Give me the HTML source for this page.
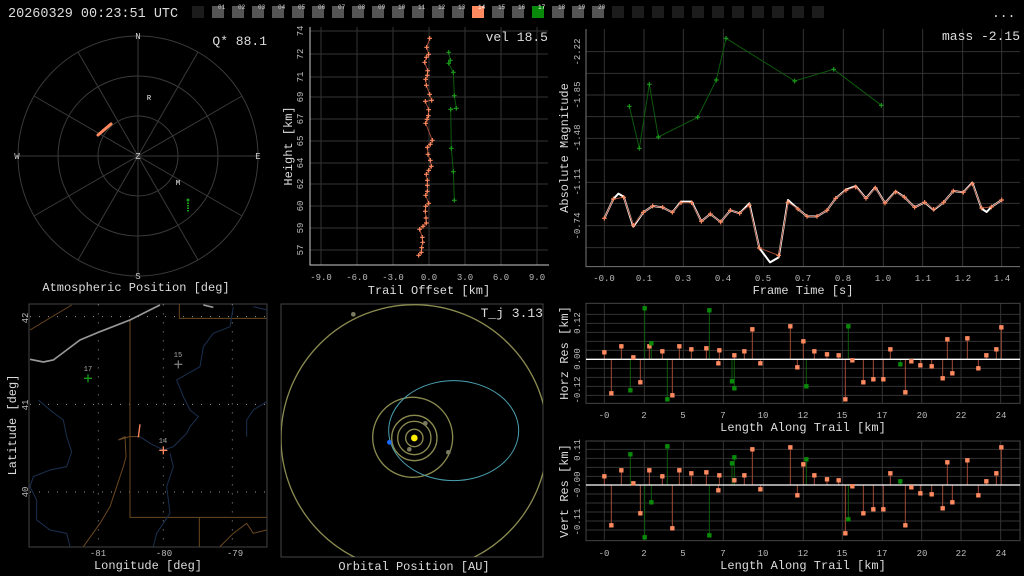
<!DOCTYPE html>
<html><head><meta charset="utf-8"><style>
html,body{margin:0;padding:0;background:#000;}
svg{display:block;font-family:"Liberation Mono",monospace;}
</style></head><body>
<svg width="1024" height="576" viewBox="0 0 1024 576" xmlns="http://www.w3.org/2000/svg">
<defs>
<marker id="po" markerUnits="userSpaceOnUse" viewBox="-9 -9 18 18" markerWidth="18" markerHeight="18" refX="0" refY="0" overflow="visible"><path d="M-7 0H7M0-7V7" stroke="#ff8a60" stroke-width="3.5"/></marker>
<marker id="pg" markerUnits="userSpaceOnUse" viewBox="-9 -9 18 18" markerWidth="18" markerHeight="18" refX="0" refY="0" overflow="visible"><path d="M-7 0H7M0-7V7" stroke="#1a9a1a" stroke-width="3.5"/></marker>
</defs>
<rect width="1024" height="576" fill="#000"/>
<text x="8" y="17" fill="#ddd" font-size="13.5">20260329 00:23:51 UTC</text>
<text x="992" y="17" fill="#ddd" font-size="13">...</text>
<g>
<rect x="192" y="6" width="12" height="12" fill="#1c1c1c"/>
<g fill="#555">
<rect x="212" y="6" width="12" height="12"/><rect x="232" y="6" width="12" height="12"/><rect x="252" y="6" width="12" height="12"/><rect x="272" y="6" width="12" height="12"/><rect x="292" y="6" width="12" height="12"/><rect x="312" y="6" width="12" height="12"/><rect x="332" y="6" width="12" height="12"/><rect x="352" y="6" width="12" height="12"/><rect x="372" y="6" width="12" height="12"/><rect x="392" y="6" width="12" height="12"/><rect x="412" y="6" width="12" height="12"/><rect x="432" y="6" width="12" height="12"/><rect x="452" y="6" width="12" height="12"/><rect x="492" y="6" width="12" height="12"/><rect x="512" y="6" width="12" height="12"/><rect x="552" y="6" width="12" height="12"/><rect x="572" y="6" width="12" height="12"/><rect x="592" y="6" width="12" height="12"/>
</g>
<rect x="472" y="6" width="12" height="12" fill="#ff8a60"/>
<rect x="532" y="6" width="12" height="12" fill="#0a8a0a"/>
<g fill="#1c1c1c">
<rect x="612" y="6" width="12" height="12"/><rect x="632" y="6" width="12" height="12"/><rect x="652" y="6" width="12" height="12"/><rect x="672" y="6" width="12" height="12"/><rect x="692" y="6" width="12" height="12"/><rect x="712" y="6" width="12" height="12"/><rect x="732" y="6" width="12" height="12"/><rect x="752" y="6" width="12" height="12"/><rect x="772" y="6" width="12" height="12"/><rect x="792" y="6" width="12" height="12"/><rect x="812" y="6" width="12" height="12"/>
</g>
<g fill="#ccc" font-size="6">
<text x="218" y="9">01</text><text x="238" y="9">02</text><text x="258" y="9">03</text><text x="278" y="9">04</text><text x="298" y="9">05</text><text x="318" y="9">06</text><text x="338" y="9">07</text><text x="358" y="9">08</text><text x="378" y="9">09</text><text x="398" y="9">10</text><text x="418" y="9">11</text><text x="438" y="9">12</text><text x="458" y="9">13</text><text x="478" y="9" fill="#fff">14</text><text x="498" y="9">15</text><text x="518" y="9">16</text><text x="538" y="9" fill="#fff">17</text><text x="558" y="9">18</text><text x="578" y="9">19</text><text x="598" y="9">20</text>
</g>
</g>

<g stroke="#3a3a3a" fill="none" stroke-width="1">
<circle cx="138" cy="156" r="40"/><circle cx="138" cy="156" r="80"/><circle cx="138" cy="156" r="120"/>
<path d="M138 36V276M18 156H258M198 52L78 260M242 96L34 216M242 216L34 96M198 260L78 52"/>
</g>
<g fill="#ccc" font-size="9" text-anchor="middle">
<text x="138" y="39">N</text><text x="138" y="279">S</text><text x="17" y="159">W</text><text x="258" y="159">E</text><text x="138" y="159">Z</text>
<text x="149" y="100" fill="#fff" font-size="7">R</text><text x="178" y="185" fill="#fff" font-size="7">M</text>
</g>
<path d="M98 135L111 124" stroke="#ff8a60" stroke-width="3" stroke-linecap="round"/>
<path d="M188 200V212" stroke="#1a9a1a" stroke-width="2" stroke-dasharray="1.5 1"/>
<circle cx="188" cy="200" r="1.5" fill="#1a9a1a"/>
<text x="267" y="45" fill="#ddd" font-size="13" text-anchor="end">Q* 88.1</text>
<text x="136" y="291" fill="#ddd" font-size="12" text-anchor="middle">Atmospheric Position [deg]</text>

<g stroke="#333" stroke-width="1">
<path d="M321 27V265M357 27V265M393 27V265M429 27V265M465 27V265M501 27V265M537 27V265"/>
<path d="M310 31H548M310 54H548M310 77H548M310 97H548M310 119H548M310 141H548M310 163H548M310 184H548M310 206H548M310 228H548M310 250H548"/>
</g>
<path d="M310 27V265H549" stroke="#ccc" stroke-width="1" fill="none"/>
<g fill="#bbb" font-size="9">
<g text-anchor="middle"><text x="321" y="280">-9.0</text><text x="357" y="280">-6.0</text><text x="393" y="280">-3.0</text><text x="429" y="280">0.0</text><text x="465" y="280">3.0</text><text x="501" y="280">6.0</text><text x="537" y="280">9.0</text></g>
<g text-anchor="middle">
<text transform="rotate(-90 303 31)" x="303" y="31">74</text><text transform="rotate(-90 303 54)" x="303" y="54">72</text><text transform="rotate(-90 303 77)" x="303" y="77">71</text><text transform="rotate(-90 303 97)" x="303" y="97">69</text><text transform="rotate(-90 303 119)" x="303" y="119">67</text><text transform="rotate(-90 303 141)" x="303" y="141">65</text><text transform="rotate(-90 303 163)" x="303" y="163">64</text><text transform="rotate(-90 303 184)" x="303" y="184">62</text><text transform="rotate(-90 303 206)" x="303" y="206">60</text><text transform="rotate(-90 303 228)" x="303" y="228">59</text><text transform="rotate(-90 303 250)" x="303" y="250">57</text>
</g></g>
<text x="429" y="294" fill="#ddd" font-size="12" text-anchor="middle">Trail Offset [km]</text>
<text transform="rotate(-90 292 146)" x="292" y="146" fill="#ddd" font-size="12" text-anchor="middle">Height [km]</text>
<text x="548" y="41" fill="#ddd" font-size="13" text-anchor="end">vel 18.5</text>
<g transform="translate(280 20) scale(0.33333)" fill="none">
<polyline stroke="#a04a35" stroke-width="3" marker-start="url(#po)" marker-mid="url(#po)" marker-end="url(#po)" points="449,55 440,82 446,103 439,112 434,127 443,152 442,166 437,178 439,196 449,223 455,241 436,244 446,269 445,287 441,298 437,310 457,361 451,373 442,382 444,403 451,421 454,439 446,451 439,463 442,481 442,496 442,514 437,526 446,550 437,559 436,574 438,594 439,609 429,619 419,628 427,652 428,667 425,683 424,697 416,706"/>
<polyline stroke="#0d5a0d" stroke-width="3" marker-start="url(#pg)" marker-mid="url(#pg)" marker-end="url(#pg)" points="506,97 511,121 506,130 520,157 523,227 529,265 512,268 514,385 520,455 523,541"/>
</g>

<g transform="translate(550 20) scale(0.33333)" fill="none">
<g stroke="#333" stroke-width="3">
<path d="M163 27V740M282 27V740M400 27V740M520 27V740M640 27V740M760 27V740M880 27V740M1000 27V740M1118 27V740M1238 27V740M1355 27V740"/>
<path d="M108 95H1410M108 160H1410M108 225H1410M108 290H1410M108 355H1410M108 420H1410M108 487H1410M108 550H1410M108 617H1410M108 683H1410"/>
</g>
<path d="M108 27V740H1410" stroke="#777" stroke-width="3"/>
<polyline stroke="#0d5a0d" stroke-width="3" marker-start="url(#pg)" marker-mid="url(#pg)" marker-end="url(#pg)" points="238,259 268,385 298,193 325,351 443,292 499,180 528,55 734,183 851,148 994,256"/>
<polyline stroke="#fff" stroke-width="6" stroke-linejoin="round" points="163,595 190,537 205,521 221,530 250,620 280,577 308,558 338,562 367,577 393,545 425,545 454,604 481,582 512,606 541,571 569,580 598,550 628,684 660,727 686,712 714,540 744,567 771,589 801,589 831,571 857,535 888,509 917,498 948,535 976,502 1005,549 1037,514 1063,531 1094,562 1124,547 1151,570 1181,547 1210,513 1240,517 1267,488 1295,566 1310,576 1324,561 1355,540"/>
<polyline stroke="#a04a35" stroke-width="3" marker-start="url(#po)" marker-mid="url(#po)" marker-end="url(#po)" points="163,595 190,537 221,532 250,616 280,577 308,558 338,562 367,577 393,548 425,548 454,604 481,582 512,606 541,571 569,580 598,556 628,684 686,706 714,547 744,567 771,589 801,589 831,571 857,535 888,511 917,501 948,535 976,504 1005,549 1037,516 1063,531 1094,562 1124,547 1151,568 1181,547 1210,513 1240,517 1267,491 1295,564 1324,561 1355,540"/>
</g>
<g fill="#bbb" font-size="9" text-anchor="middle">
<text x="604" y="281">-0.0</text><text x="644" y="281">0.1</text><text x="683" y="281">0.3</text><text x="723" y="281">0.4</text><text x="763" y="281">0.5</text><text x="803" y="281">0.7</text><text x="843" y="281">0.8</text><text x="883" y="281">1.0</text><text x="923" y="281">1.1</text><text x="963" y="281">1.2</text><text x="1002" y="281">1.4</text>
<text transform="rotate(-90 580 52)" x="580" y="52">-2.22</text><text transform="rotate(-90 580 95)" x="580" y="95">-1.85</text><text transform="rotate(-90 580 138)" x="580" y="138">-1.48</text><text transform="rotate(-90 580 182)" x="580" y="182">-1.11</text><text transform="rotate(-90 580 226)" x="580" y="226">-0.74</text>
</g>
<text x="803" y="294" fill="#ddd" font-size="12" text-anchor="middle">Frame Time [s]</text>
<text transform="rotate(-90 568 148)" x="568" y="148" fill="#ddd" font-size="12" text-anchor="middle">Absolute Magnitude</text>
<text x="1020" y="40" fill="#ddd" font-size="13" text-anchor="end">mass -2.15</text>

<rect x="29" y="304" width="238" height="243" fill="none" stroke="#444"/>
<g transform="translate(0 300) scale(0.33333)" fill="none">
<path d="M90 313H802M90 576H802M295 13V740M490 13V740M697 13V740M90 50H802" stroke="#999" stroke-width="3" stroke-dasharray="3 24"/>
<path d="M90 90L215 15M390 60V652H800M538 13V55H800M598 652V740M355 420L375 410L378 470L370 500L350 560L330 620L300 670L250 740M420 410L388 410L355 420M660 740L700 700L740 670L760 700L800 690" stroke="#6a4820" stroke-width="3"/>
<path d="M700 20L690 80L640 100L610 140L600 200L530 240L550 290L570 330L595 350L570 380L560 400L520 440L490 450L450 430L420 410M510 460L520 500L500 560L510 640L470 700L460 740M115 300L150 330L190 360L200 410L215 455L200 500L150 510L100 530L90 560L110 600L110 660L150 690L200 700L210 740M800 305L760 330L740 360L740 410M760 20L802 30" stroke="#1a3050" stroke-width="3"/>
<path d="M90 178L130 186L160 180L200 150L240 120L300 95L390 60L440 35L470 20L480 15M610 15L640 22" stroke="#999" stroke-width="5"/>
<path d="M420 373L415 412" stroke="#ff8a60" stroke-width="4"/>
<path d="M252 235H276M264 223V247" stroke="#1a9a1a" stroke-width="4"/>
<path d="M523 193H547M535 181V205" stroke="#777" stroke-width="4"/>
<path d="M478 451H502M490 439V463" stroke="#ff8a60" stroke-width="4"/>
</g>
<g fill="#aaa" font-size="7" text-anchor="middle"><text x="88" y="371">17</text><text x="178" y="357">15</text><text x="163" y="443">14</text></g>
<g fill="#bbb" font-size="9" text-anchor="middle">
<text x="98" y="556">-81</text><text x="164" y="556">-80</text><text x="235" y="556">-79</text>
<text transform="rotate(-90 28 318)" x="28" y="318">42</text><text transform="rotate(-90 28 405)" x="28" y="405">41</text><text transform="rotate(-90 28 492)" x="28" y="492">40</text>
</g>
<text x="148" y="569" fill="#ddd" font-size="12" text-anchor="middle">Longitude [deg]</text>
<text transform="rotate(-90 16 425)" x="16" y="425" fill="#ddd" font-size="12" text-anchor="middle">Latitude [deg]</text>

<rect x="281" y="304" width="262" height="253" fill="none" stroke="#444"/>
<svg x="281" y="304" width="262" height="253" overflow="hidden">
<g transform="translate(-281 -304) translate(278 300) scale(0.33333)" fill="none">
<circle cx="409" cy="414" r="400" stroke="#8a8a50" stroke-width="4"/>
<circle cx="404" cy="412" r="120" stroke="#8a8a50" stroke-width="4"/>
<circle cx="409" cy="414" r="68" stroke="#8a8a50" stroke-width="4"/>
<circle cx="409" cy="414" r="50" stroke="#8a8a50" stroke-width="4"/>
<circle cx="409" cy="414" r="26" stroke="#8a8a50" stroke-width="4"/>
<ellipse cx="527" cy="392" rx="195" ry="150" stroke="#4aa0b0" stroke-width="3"/>
<g fill="#7a7a60"><circle cx="226" cy="43" r="7"/><circle cx="442" cy="370" r="7"/><circle cx="394" cy="448" r="7"/><circle cx="511" cy="457" r="7"/></g>
<circle cx="409" cy="414" r="10" fill="#ffee00"/>
<circle cx="334" cy="427" r="7" fill="#1a6aff"/>
</g></svg>
<text x="543" y="317" fill="#ddd" font-size="13" text-anchor="end">T_j 3.13</text>
<text x="414" y="570" fill="#ddd" font-size="12" text-anchor="middle">Orbital Position [AU]</text>

<g transform="translate(550 300) scale(0.33333)" fill="none">
<g stroke="#333" stroke-width="3">
<path d="M163 10V310M283 10V310M400 10V310M520 10V310M640 10V310M760 10V310M877 10V310M997 10V310M1115 10V310M1233 10V310M1352 10V310M108 43H1410M108 70H1410M108 97H1410M108 124H1410M108 151H1410M108 205H1410M108 232H1410M108 259H1410M108 286H1410"/>
<path d="M163 423V722M283 423V722M400 423V722M520 423V722M640 423V722M760 423V722M877 423V722M997 423V722M1115 423V722M1233 423V722M1352 423V722M108 448H1410M108 475H1410M108 502H1410M108 529H1410M108 582H1410M108 609H1410M108 636H1410M108 663H1410M108 690H1410"/>
</g>
<rect x="108" y="10" width="1302" height="300" stroke="#444" stroke-width="3"/>
<rect x="108" y="423" width="1302" height="299" stroke="#444" stroke-width="3"/>
<path d="M163 178V157M184 178V280M214 178V139M250 178V172M271 178V247M298 178V139M337 178V154M367 178V286M388 178V139M424 178V148M469 178V145M505 178V190M508 178V151M553 178V166M583 178V154M607 178V88M631 178V190M721 178V79M742 178V202M760 178V124M793 178V154M831 178V163M866 178V166M886 178V298M907 178V181M940 178V247M970 178V238M1000 178V238M1021 178V148M1066 178V277M1084 178V184M1111 178V196M1145 178V199M1178 178V235M1192 178V118M1207 178V220M1252 178V115M1285 178V205M1309 178V166M1339 178V148M1354 178V82
M163 555V529M184 555V676M214 555V511M250 555V550M271 555V640M298 555V511M337 555V529M367 555V685M388 555V511M424 555V520M469 555V517M505 555V571M508 555V526M553 555V541M583 555V526M607 555V448M631 555V568M721 555V442M742 555V586M760 555V493M793 555V526M831 555V538M866 555V541M886 555V700M907 555V559M940 555V640M970 555V628M1000 555V628M1021 555V520M1066 555V676M1084 555V562M1111 555V580M1145 555V583M1178 555V625M1192 555V487M1207 555V607M1252 555V481M1285 555V586M1309 555V544M1339 555V520M1354 555V442" stroke="#a04a35" stroke-width="3"/>
<path d="M241 178V271M284 178V25M304 178V130M352 178V298M478 178V31M546 178V244M553 178V265M769 178V259M895 178V79M1051 178V193M241 555V463M284 555V712M304 555V607M352 555V439M478 555V706M546 555V490M553 555V472M769 555V478M895 555V658M1051 555V544" stroke="#0d5a0d" stroke-width="3"/>
<path d="M108 178H1410M108 555H1410" stroke="#fff" stroke-width="4"/>
<g stroke="#ff8a60" stroke-width="13" stroke-linecap="square">
<path d="M163 157h.1M184 280h.1M214 139h.1M250 172h.1M271 247h.1M298 139h.1M337 154h.1M367 286h.1M388 139h.1M424 148h.1M469 145h.1M505 190h.1M508 151h.1M553 166h.1M583 154h.1M607 88h.1M631 190h.1M721 79h.1M742 202h.1M760 124h.1M793 154h.1M831 163h.1M866 166h.1M886 298h.1M907 181h.1M940 247h.1M970 238h.1M1000 238h.1M1021 148h.1M1066 277h.1M1084 184h.1M1111 196h.1M1145 199h.1M1178 235h.1M1192 118h.1M1207 220h.1M1252 115h.1M1285 205h.1M1309 166h.1M1339 148h.1M1354 82h.1"/>
<path d="M163 529h.1M184 676h.1M214 511h.1M250 550h.1M271 640h.1M298 511h.1M337 529h.1M367 685h.1M388 511h.1M424 520h.1M469 517h.1M505 571h.1M508 526h.1M553 541h.1M583 526h.1M607 448h.1M631 568h.1M721 442h.1M742 586h.1M760 493h.1M793 526h.1M831 538h.1M866 541h.1M886 700h.1M907 559h.1M940 640h.1M970 628h.1M1000 628h.1M1021 520h.1M1066 676h.1M1084 562h.1M1111 580h.1M1145 583h.1M1178 625h.1M1192 487h.1M1207 607h.1M1252 481h.1M1285 586h.1M1309 544h.1M1339 520h.1M1354 442h.1"/>
</g>
<path stroke="#0a8a0a" stroke-width="13" stroke-linecap="square" d="M241 271h.1M284 25h.1M304 130h.1M352 298h.1M478 31h.1M546 244h.1M553 265h.1M769 259h.1M895 79h.1M1051 193h.1M241 463h.1M284 712h.1M304 607h.1M352 439h.1M478 706h.1M546 490h.1M553 472h.1M769 478h.1M895 658h.1M1051 544h.1"/>
</g>
<g fill="#bbb" font-size="9" text-anchor="middle">
<text x="604" y="418">-0</text><text x="644" y="418">2</text><text x="683" y="418">5</text><text x="723" y="418">7</text><text x="763" y="418">10</text><text x="803" y="418">12</text><text x="842" y="418">15</text><text x="882" y="418">17</text><text x="922" y="418">20</text><text x="961" y="418">22</text><text x="1001" y="418">24</text>
<text x="604" y="556">-0</text><text x="644" y="556">2</text><text x="683" y="556">5</text><text x="723" y="556">7</text><text x="763" y="556">10</text><text x="803" y="556">12</text><text x="842" y="556">15</text><text x="882" y="556">17</text><text x="922" y="556">20</text><text x="961" y="556">22</text><text x="1001" y="556">24</text>
<text transform="rotate(-90 580 323)" x="580" y="323">0.12</text><text transform="rotate(-90 580 359)" x="580" y="359">0.00</text><text transform="rotate(-90 580 390)" x="580" y="390">-0.12</text>
<text transform="rotate(-90 580 450)" x="580" y="450">0.11</text><text transform="rotate(-90 580 485)" x="580" y="485">-0.00</text><text transform="rotate(-90 580 522)" x="580" y="522">-0.11</text>
</g>
<text x="803" y="431" fill="#ddd" font-size="12" text-anchor="middle">Length Along Trail [km]</text>
<text x="803" y="569" fill="#ddd" font-size="12" text-anchor="middle">Length Along Trail [km]</text>
<text transform="rotate(-90 568 353)" x="568" y="353" fill="#ddd" font-size="12" text-anchor="middle">Horz Res [km]</text>
<text transform="rotate(-90 568 491)" x="568" y="491" fill="#ddd" font-size="12" text-anchor="middle">Vert Res [km]</text>
</svg>
</body></html>
